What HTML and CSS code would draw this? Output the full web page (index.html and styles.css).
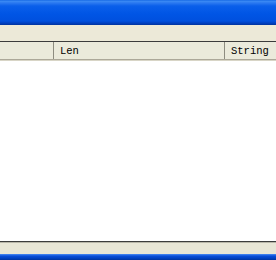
FILE: index.html
```html
<!DOCTYPE html>
<html lang="en">

<head>
    <meta charset="UTF-8">
    <meta name="viewport" content="width=device-width, initial-scale=1.0">
    <title>Strings</title>
    <link rel="stylesheet" href="styles.css">
</head>

<body>
    <div class="window">
        <div class="titlebar"></div>
        <div class="toolbar"></div>
        <div class="list">
            <div class="header">
                <div class="col col-addr"></div>
                <div class="col col-len">Len</div>
                <div class="col col-str">String</div>
            </div>
            <div class="rows"></div>
        </div>
        <div class="statusbar"></div>
        <div class="frame-bottom"></div>
    </div>
</body>

</html>
```

FILE: styles.css
```css
* {
    margin: 0;
    border: 0;
    padding: 0;
    box-sizing: border-box;
}

body {
    width: 276px;
    height: 260px;
    overflow: hidden;
    background-color: #ece9d8;
}

.window {
    height: 260px;
    display: flex;
    flex-direction: column;
}

.titlebar {
    height: 25px;
    background: linear-gradient(#0a5ee0 0px, #3d8cf4 1px, #2a78f0 3px, #0a5fea 6px, #0055e5 14px, #0050de 21px, #0041c2 23px, #00339e 25px);
}

.toolbar {
    height: 16px;
    background-color: #ece9d8;
}

.list {
    flex: 1;
    display: flex;
    flex-direction: column;
    border-top: 1px solid #3c3c3c;
    border-bottom: 1px solid #3c3c3c;
    background-color: #fff;
}

.header {
    display: flex;
    height: 18px;
    background-color: #ebeadb;
    border-bottom: 1px solid #aca899;
    box-shadow: 0 1px 0 #d8d5c6;
    font-family: "Liberation Mono", "Courier New", monospace;
    font-size: 10.5px;
    color: #000;
}

.col {
    display: flex;
    align-items: center;
    padding-left: 6px;
    border-right: 1px solid #8e8c80;
}

.col-addr {
    width: 54px;
}

.col-len {
    width: 171px;
}

.col-str {
    flex: 1;
    border-right: 0;
}

.rows {
    flex: 1;
}

.statusbar {
    height: 12px;
    border-top: 1px solid #b8b6a8;
    background-color: #e8e6d6;
}

.frame-bottom {
    height: 6px;
    background: linear-gradient(#4f8df0 0px, #2a6ee8 1px, #0a4fd8 2px, #0042c4 4px, #00339e 6px);
}
```
